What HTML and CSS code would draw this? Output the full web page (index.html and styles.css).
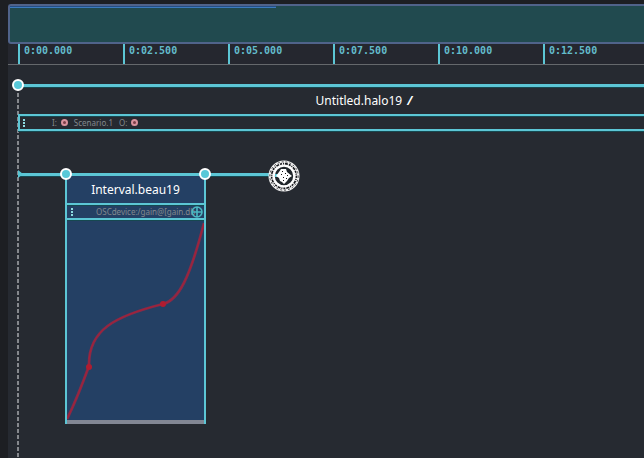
FILE: index.html
```html
<!DOCTYPE html>
<html lang="en">
<head>
<meta charset="utf-8">
<title>Untitled.halo19</title>
<link rel="stylesheet" href="styles.css">
</head>
<body>
<main class="app">
  <div class="overview"><div class="overview-range"></div></div>
  <ol class="ruler">
    <li class="tick">0:00.000</li>
    <li class="tick">0:02.500</li>
    <li class="tick">0:05.000</li>
    <li class="tick">0:07.500</li>
    <li class="tick">0:10.000</li>
    <li class="tick">0:12.500</li>
  </ol>
  <section class="scenario">
    <div class="rail"><span class="handle"></span></div>
    <div class="timeline">
      <h1 class="title scenario-title">Untitled.halo19 <span class="slash">/</span></h1>
      <div class="slot">
        <span class="grip"></span>
        <span class="port-label">I:</span><span class="port"></span>
        <span class="process">Scenario.1</span>
        <span class="port-label">O:</span><span class="port"></span>
      </div>
      <div class="canvas">
        <div class="event-line">
          <svg class="trigger" width="6" height="8" viewBox="0 0 6 8"><path d="M0 0 5 4 0 8z" fill="#58c5d3"/></svg>
          <svg class="dial" width="32" height="32" viewBox="0 0 32 32">
            <circle cx="16" cy="16" r="15.5" fill="#f4f4f4"/>
            <circle cx="16" cy="16" r="14.2" fill="none" stroke="#15171b" stroke-width=".8" stroke-dasharray="2 2"/>
            <circle cx="16" cy="16" r="12.4" fill="none" stroke="#15171b" stroke-width="1.6" stroke-dasharray="2 1 1 1 3 1"/>
            <circle cx="16" cy="16" r="10" fill="#20262b" stroke="#fff" stroke-width="1.6"/>
            <path d="M7 14h4v3H7z" fill="#58c5d3"/>
            <path d="M13 9h5l1 3 5 4-3 2-2 3-3 3-2-2-2-1-1-3-3-2 3-4z" fill="#fff"/>
            <path d="M14 11h1v1h-1zM17 13h1v1h-1zM19 15h1v1h-1zM13 14h1v1h-1zM15 17h1v1h-1zM18 18h1v1h-1zM15 20h1v1h-1z" fill="#111"/>
          </svg>
        </div>
        <article class="interval">
          <span class="handle"></span>
          <span class="handle handle-end"></span>
          <h2 class="title interval-title">Interval.beau19</h2>
          <div class="slot interval-slot">
            <span class="grip"></span>
            <span class="address">OSCdevice:/gain@[gain.db</span>
            <svg class="target" width="12" height="12" viewBox="0 0 12 12"><path d="M6 1v10M1 6h10M6 1a5 5 0 1 0 0 10A5 5 0 0 0 6 1" fill="none" stroke="#4bb8c2" stroke-width="1.6"/></svg>
          </div>
          <svg class="curve" viewBox="0 0 137 200" preserveAspectRatio="none">
            <path d="M0 199C8 183 15 165 22 146C21 110 48 96 96 84C112 80 123 57 137 3" fill="none" stroke="#822c4b" stroke-width="2.8"/>
            <path d="M0 199C8 183 15 165 22 146C21 110 48 96 96 84C112 80 123 57 137 3" fill="none" stroke="#a82036" stroke-width="1"/>
            <circle cx="22" cy="147" r="3" fill="#b01c30"/>
            <circle cx="96" cy="84" r="3" fill="#b01c30"/>
          </svg>
        </article>
      </div>
    </div>
  </section>
</main>
</body>
</html>
```
FILE: styles.css
```css
:root {
  --cyan: #5cc6d5;
  --edge: #164850;
}
* { box-sizing: border-box; }
body {
  margin: 0;
  background: #1d1f23;
  font-family: "Noto Sans", sans-serif;
  overflow: hidden;
}
.app {
  display: flex;
  flex-direction: column;
  min-height: 100vh;
  padding: 4px 0 0 8px;
}
.overview {
  height: 40px;
  background: #214a4f;
  border: 2px solid #50638a;
  border-right: 0;
  border-radius: 3px 0 0 3px;
}
.overview-range {
  width: 42%;
  height: 2px;
  border-bottom: 1px solid #3c7bbd;
  background: #244d83;
}
.ruler {
  display: grid;
  grid-template-columns: repeat(6, 105px);
  margin: 0;
  padding: 0 0 0 10px;
  list-style: none;
  background: #25272f;
  border-bottom: 1px solid #65686c;
}
.tick {
  height: 20px;
  padding-left: 4px;
  border-left: 2px solid var(--cyan);
  font: bold 10px/14px "DejaVu Sans Mono", monospace;
  color: #63bccb;
}
.scenario {
  flex: 1;
  display: flex;
  flex-direction: column;
  padding: 19px 0 0 9px;
  background: #262a31;
}
.rail {
  position: relative;
  height: 3px;
  background: var(--cyan);
  box-shadow: 0 1px var(--edge);
}
.handle {
  position: absolute;
  z-index: 2;
  top: -5px;
  left: -5px;
  width: 12px;
  height: 12px;
  border: 2px solid #fff;
  border-radius: 50%;
  background: #58c8d8;
}
.timeline {
  flex: 1;
  display: flex;
  flex-direction: column;
  padding-left: 1px;
  background: repeating-linear-gradient(#85888d 0 4px, transparent 4px 6px) 0 0 / 2px 100% no-repeat;
}
.title {
  margin: 0;
  font-size: 12px;
  font-weight: 400;
  line-height: 27px;
  text-align: center;
  color: #fff;
}
.scenario-title { padding-left: 66px; }
.slash {
  margin-left: 2px;
  font-weight: 700;
  font-style: italic;
}
.slot {
  display: flex;
  align-items: center;
  height: 17px;
  padding-left: 3px;
  border: solid var(--cyan);
  border-width: 2px 0 2px 2px;
  box-shadow: 0 1px var(--edge), inset 0 1px var(--edge);
  font-size: 8px;
  line-height: 12px;
  color: #83898e;
}
.grip {
  flex: none;
  width: 2px;
  height: 8px;
  background: repeating-linear-gradient(#8ddce2 0 2px, transparent 2px 3px);
}
.port-label { margin-left: 27px; }
.port {
  width: 7px;
  height: 7px;
  margin-left: 4px;
  border: 2px solid #d9929c;
  border-radius: 50%;
  background: #7c4048;
}
.process { margin-left: 6px; }
.process + .port-label { margin-left: 6px; }
.canvas {
  flex: 1;
  padding-top: 42px;
}
.event-line {
  position: relative;
  width: 253px;
  height: 3px;
  background: var(--cyan);
  box-shadow: 0 1px var(--edge);
}
.trigger {
  position: absolute;
  top: -3px;
  left: 0;
}
.dial {
  position: absolute;
  top: -13px;
  right: -29px;
}
.interval {
  position: relative;
  width: 141px;
  margin-left: 47px;
  border: solid var(--cyan);
  border-width: 0 2px;
  background: #244064;
}
.interval .handle {
  top: -8px;
  left: -7px;
}
.interval .handle-end {
  left: auto;
  right: -7px;
}
.interval-slot {
  position: relative;
  padding-left: 4px;
  border-left: 0;
}
.address {
  margin-left: 23px;
  white-space: nowrap;
}
.target {
  position: absolute;
  right: 1px;
}
.curve {
  display: block;
  width: 100%;
  height: 204px;
  border-bottom: 4px solid #828794;
}
```
